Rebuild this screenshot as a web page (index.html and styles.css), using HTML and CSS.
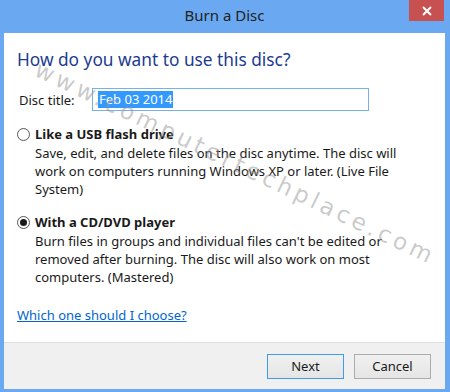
FILE: index.html
```html
<!DOCTYPE html>
<html lang="en">

<head>
    <meta charset="UTF-8">
    <title>Burn a Disc</title>
    <link rel="stylesheet" href="styles.css">
</head>

<body>
    <div class="window">
        <div class="title-bar">
            <span class="title-text">Burn a Disc</span>
            <button class="close-btn" aria-label="Close">
                <svg width="10" height="10" viewBox="0 0 10 10">
                    <path d="M1 1 L9 9 M9 1 L1 9" stroke="#fff" stroke-width="2" />
                </svg>
            </button>
        </div>

        <div class="client">
            <div class="content">
                <h1 class="heading">How do you want to use this disc?</h1>

                <div class="title-row">
                    <label for="disc-title" class="title-label">Disc title:</label>
                    <div class="title-input"><span class="selected">Feb 03 2014</span></div>
                </div>

                <div class="option">
                    <div class="option-head">
                        <span class="radio"></span>
                        <span class="option-name">Like a USB flash drive</span>
                    </div>
                    <p class="option-desc">Save, edit, and delete files on the disc anytime. The disc will work on computers running Windows XP or later. (Live File System)</p>
                </div>

                <div class="option second">
                    <div class="option-head">
                        <span class="radio checked"></span>
                        <span class="option-name">With a CD/DVD player</span>
                    </div>
                    <p class="option-desc">Burn files in groups and individual files can't be edited or removed after burning. The disc will also work on most computers. (Mastered)</p>
                </div>

                <a href="#" class="help-link">Which one should I choose?</a>
            </div>

            <div class="footer">
                <button class="btn default">Next</button>
                <button class="btn">Cancel</button>
            </div>
        </div>

        <div class="watermark">www.computertechplace.com</div>
    </div>
</body>

</html>
```

FILE: styles.css
```css
* {
    margin: 0;
    padding: 0;
    box-sizing: border-box;
}

body {
    font-family: 'Noto Sans', 'Open Sans', sans-serif;
    background: #6aa9f1;
    color: #1a1a1a;
}

.window {
    position: relative;
    width: 450px;
    height: 392px;
    background: #6aa9f1;
    display: flex;
    flex-direction: column;
    padding: 0 5px 3px 4px;
    overflow: hidden;
}

/* Title bar */
.title-bar {
    height: 33px;
    display: flex;
    justify-content: center;
    align-items: center;
    position: relative;
}

.title-text {
    font-size: 15px;
    color: #222;
    margin-top: -3px;
}

.close-btn {
    position: absolute;
    top: 0;
    right: 1px;
    width: 35px;
    height: 21px;
    background: #c75050;
    border: none;
    display: flex;
    justify-content: center;
    align-items: center;
}

/* Client area */
.client {
    flex: 1;
    background: #fff;
    display: flex;
    flex-direction: column;
}

.content {
    flex: 1;
    padding: 14px 13px 0 13px;
}

.heading {
    font-size: 17.3px;
    font-weight: normal;
    color: #1c3b8f;
    line-height: 26px;
}

.title-row {
    display: flex;
    align-items: center;
    margin-top: 15px;
    font-size: 13px;
}

.title-label {
    width: 75px;
    padding-left: 2px;
}

.title-input {
    width: 277px;
    height: 23px;
    border: 1px solid #78b0e8;
    display: flex;
    align-items: center;
    padding-left: 5px;
}

.selected {
    background: #3399ff;
    color: #fff;
    line-height: 17px;
    padding: 0 1px;
}

.option {
    margin-top: 13px;
    font-size: 13px;
}

.option.second {
    margin-top: 14px;
}

.option-head {
    display: flex;
    align-items: center;
    height: 20px;
}

.radio {
    width: 13px;
    height: 13px;
    border: 1px solid #555;
    border-radius: 50%;
    margin-right: 5px;
    display: flex;
    justify-content: center;
    align-items: center;
}

.radio.checked::after {
    content: "";
    width: 7px;
    height: 7px;
    border-radius: 50%;
    background: #1a1a1a;
}

.option-name {
    font-weight: bold;
}

.option-desc {
    padding-left: 18px;
    padding-right: 10px;
    line-height: 18px;
}

.help-link {
    display: inline-block;
    margin-top: 20px;
    font-size: 13px;
    color: #0066cc;
    text-decoration: underline;
}

/* Footer */
.footer {
    height: 47px;
    background: #f0f0f0;
    border-top: 1px solid #dfdfdf;
    display: flex;
    justify-content: flex-end;
    align-items: center;
    gap: 10px;
    padding: 0 14px 0 0;
}

.btn {
    width: 77px;
    height: 25px;
    font-family: 'Noto Sans', 'Open Sans', sans-serif;
    font-size: 13px;
    color: #1a1a1a;
    background: linear-gradient(#f0f0f0, #e5e5e5);
    border: 1px solid #acacac;
}

.btn.default {
    border: 1px solid #3c9cef;
}

.watermark {
    position: absolute;
    left: 42px;
    top: 56px;
    transform-origin: left top;
    transform: rotate(25.5deg);
    font-family: 'DejaVu Sans', sans-serif;
    font-size: 23px;
    letter-spacing: 4px;
    color: rgba(150, 150, 150, 0.5);
    white-space: nowrap;
    pointer-events: none;
}
```
